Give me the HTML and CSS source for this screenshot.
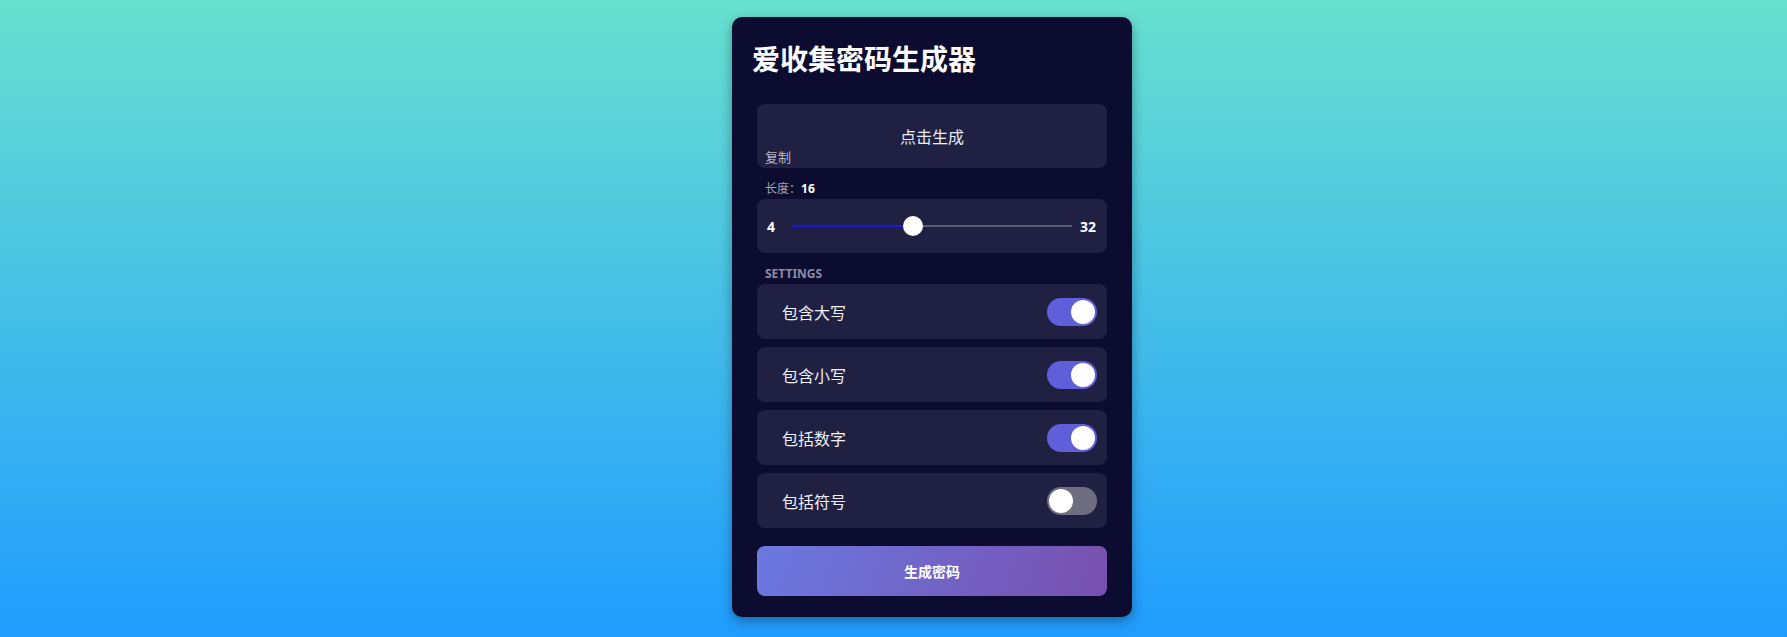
FILE: index.html
```html
<!DOCTYPE html>
<html lang="zh-CN">
<head>
  <meta charset="UTF-8">
  <meta name="viewport" content="width=device-width, initial-scale=1.0">
  <title>爱收集密码生成器</title>
  <link rel="stylesheet" href="styles.css">
</head>
<body>
  <div class="page">
    <div class="card">
      <h1 class="title">爱收集密码生成器</h1>

      <!-- 结果 -->
      <div class="result">
        <span class="result-text">点击生成</span>
        <button class="copy-btn">复制</button>
      </div>

      <!-- 长度 -->
      <div class="field-label">长度：<strong>16</strong></div>
      <div class="length-box">
        <span class="num num-min">4</span>
        <input type="range" class="range" min="4" max="32" value="16" style="--fill: 43.4%">
        <span class="num num-max">32</span>
      </div>

      <!-- 设置 -->
      <div class="section-label">SETTINGS</div>
      <div class="setting-list">
        <div class="setting">
          <span>包含大写</span>
          <label class="switch"><input type="checkbox" checked><span class="knob"></span></label>
        </div>
        <div class="setting">
          <span>包含小写</span>
          <label class="switch"><input type="checkbox" checked><span class="knob"></span></label>
        </div>
        <div class="setting">
          <span>包括数字</span>
          <label class="switch"><input type="checkbox" checked><span class="knob"></span></label>
        </div>
        <div class="setting">
          <span>包括符号</span>
          <label class="switch"><input type="checkbox"><span class="knob"></span></label>
        </div>
      </div>

      <button class="generate">生成密码</button>
    </div>
  </div>
</body>
</html>
```

FILE: styles.css
```css
* {
  box-sizing: border-box;
}
body {
  margin: 0;
  min-height: 100vh;
  font-family: "Noto Sans", "Noto Sans CJK SC", sans-serif;
  background: linear-gradient(to top, #209cff 0%, #68e0cf 100%);
  color: #fff;
}
.page {
  display: flex;
  justify-content: center;
  padding: 17px 0 0 77px;
}
.card {
  width: 400px;
  background: #0b0c2f;
  border-radius: 10px;
  padding: 22px 25px 21px;
  box-shadow: 0 4px 12px rgba(0, 0, 0, 0.35);
}
.title {
  margin: 0 -5px 25px;
  font-size: 28px;
  line-height: 40px;
  font-weight: 700;
}
.result {
  position: relative;
  height: 64px;
  background: #1f2042;
  border-radius: 8px;
  display: flex;
  align-items: center;
  justify-content: center;
}
.result-text {
  font-size: 16px;
  color: #ececf4;
}
.copy-btn {
  position: absolute;
  left: 8px;
  bottom: 2px;
  padding: 0;
  border: none;
  background: none;
  font-family: inherit;
  font-size: 13px;
  line-height: 18px;
  color: #b4b4c6;
}
.field-label {
  margin: 13px 0 2px 8px;
  font-size: 12px;
  line-height: 16px;
  color: #a3a3b8;
}
.field-label strong {
  color: #fff;
  font-weight: 700;
}
.length-box {
  height: 54px;
  background: #1f2042;
  border-radius: 8px;
  display: flex;
  align-items: center;
  padding: 0 11px 0 10px;
}
.num {
  font-size: 14px;
  font-weight: 700;
}
.range {
  -webkit-appearance: none;
  appearance: none;
  flex: 1;
  height: 20px;
  margin: 0 8px 0 17px;
  background: transparent;
}
.range::-webkit-slider-runnable-track {
  height: 2px;
  background: linear-gradient(to right, #1a1adb var(--fill), #5c5d75 var(--fill));
}
.range::-webkit-slider-thumb {
  -webkit-appearance: none;
  width: 20px;
  height: 20px;
  margin-top: -9px;
  border-radius: 50%;
  background: #fff;
}
.section-label {
  margin: 13px 0 2px 8px;
  font-size: 12px;
  line-height: 16px;
  font-weight: 700;
  color: #8c8ca6;
}
.setting-list {
  display: flex;
  flex-direction: column;
  gap: 8px;
}
.setting {
  height: 55px;
  background: #1f2042;
  border-radius: 8px;
  display: flex;
  align-items: center;
  justify-content: space-between;
  padding: 0 10px 0 25px;
  font-size: 16px;
  color: #f0f0f6;
}
.switch {
  position: relative;
  width: 50px;
  height: 28px;
}
.switch input {
  display: none;
}
.knob {
  position: absolute;
  inset: 0;
  border-radius: 14px;
  background: #6e6e80;
}
.knob::before {
  content: "";
  position: absolute;
  top: 2px;
  left: 2px;
  width: 24px;
  height: 24px;
  border-radius: 50%;
  background: #fff;
}
.switch input:checked + .knob {
  background: #5f5fd9;
}
.switch input:checked + .knob::before {
  left: 24px;
}
.generate {
  display: block;
  width: 100%;
  height: 50px;
  margin-top: 18px;
  border: none;
  border-radius: 8px;
  background: linear-gradient(110deg, #6b79e0 0%, #7850ae 100%);
  font-family: inherit;
  font-size: 14px;
  font-weight: 700;
  color: #fff;
}
```
